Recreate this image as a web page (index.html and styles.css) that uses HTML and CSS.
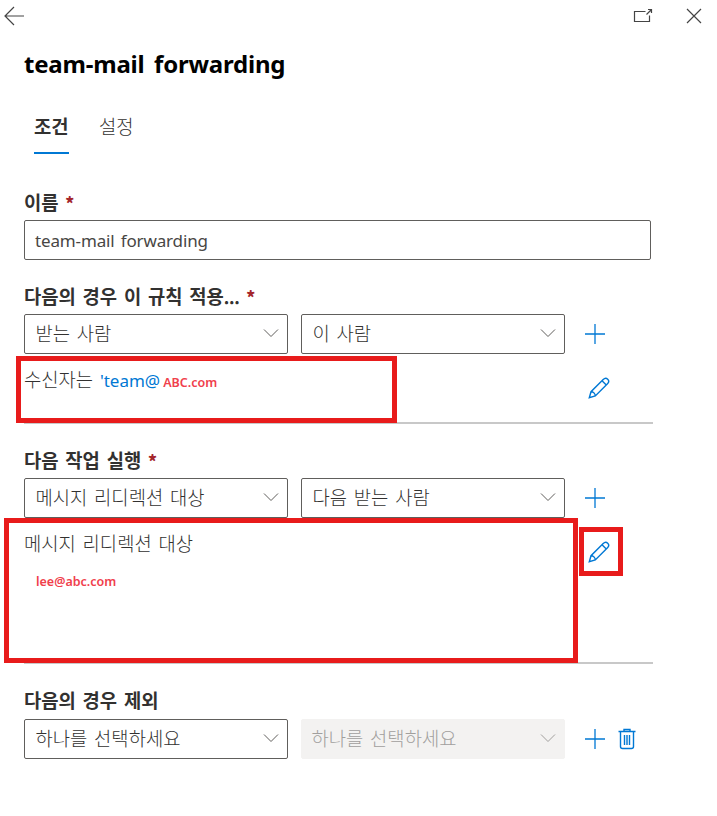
FILE: index.html
```html
<!DOCTYPE html>
<html lang="ko">
<head>
<meta charset="UTF-8">
<title>team-mail forwarding</title>
<link rel="stylesheet" href="styles.css">
</head>
<body>

<svg width="0" height="0" class="sprite">
  <symbol id="chevron" viewBox="0 0 16 10"><path d="M1 1.5L8 8.5L15 1.5"/></symbol>
  <symbol id="plus" viewBox="0 0 20 20"><path d="M10 0V20M0 10H20"/></symbol>
  <symbol id="pencil" viewBox="0 0 22 22"><path d="M1.3 20.7L3 14.7L15.2 2.5C16.6 1.1 18.4 .9 19.7 2.2C21 3.5 20.9 5.4 19.5 6.8L7.3 19Z M3 14.7C5.3 14.7 7.3 16.5 7.3 19 M14 3.7L18.3 8"/></symbol>
</svg>

<div class="topbar">
  <svg class="back" width="21" height="20" viewBox="0 0 21 20"><path d="M20 10H1M10 1L1 10L10 19"/></svg>
  <div class="window-icons">
    <svg width="20" height="16" viewBox="0 0 20 16"><path d="M12.5 3.5H1.5V13.5H16.5V7.5M13.5 6.5L18 2M15 1.5H18.5V5"/></svg>
    <svg width="16" height="16" viewBox="0 0 16 16"><path d="M1 1L15 15M15 1L1 15"/></svg>
  </div>
</div>

<h1>team-mail forwarding</h1>

<div class="tabs">
  <a class="tab active">조건</a>
  <a class="tab">설정</a>
</div>

<form class="rule">
  <section class="name">
    <label>이름 <b class="required">*</b></label>
    <div class="input">team-mail forwarding</div>
  </section>

  <section class="condition">
    <label>다음의 경우 이 규칙 적용<span class="dots">...</span> <b class="required">*</b></label>
    <div class="row">
      <div class="select">받는 사람<svg class="chevron"><use href="#chevron"/></svg></div>
      <div class="select">이 사람<svg class="chevron"><use href="#chevron"/></svg></div>
      <svg class="plus"><use href="#plus"/></svg>
    </div>
    <div class="detail">
      <div class="value">수신자는 <span class="link">'team@</span><span class="note">ABC.com</span></div>
      <svg class="pencil"><use href="#pencil"/></svg>
      <div class="mark mark-condition"></div>
    </div>
  </section>

  <section class="action">
    <label>다음 작업 실행 <b class="required">*</b></label>
    <div class="row">
      <div class="select">메시지 리디렉션 대상<svg class="chevron"><use href="#chevron"/></svg></div>
      <div class="select">다음 받는 사람<svg class="chevron"><use href="#chevron"/></svg></div>
      <svg class="plus"><use href="#plus"/></svg>
    </div>
    <div class="detail">
      <div class="value">메시지 리디렉션 대상<div class="note address">lee@abc.com</div></div>
      <svg class="pencil"><use href="#pencil"/></svg>
      <div class="mark mark-action"></div>
      <div class="mark mark-edit"></div>
    </div>
  </section>

  <section class="except">
    <label>다음의 경우 제외</label>
    <div class="row">
      <div class="select">하나를 선택하세요<svg class="chevron"><use href="#chevron"/></svg></div>
      <div class="select disabled">하나를 선택하세요<svg class="chevron"><use href="#chevron"/></svg></div>
      <svg class="plus"><use href="#plus"/></svg>
      <svg class="trash" width="18" height="22" viewBox="0 0 18 22"><path d="M.5 3.5H17.5M6 3V1.5H12V3M2.5 4V18.5Q2.5 20.5 4.5 20.5H13.5Q15.5 20.5 15.5 18.5V4M6.5 7V17M9 7V17M11.5 7V17"/></svg>
    </div>
  </section>
</form>

</body>
</html>
```

FILE: styles.css
```css
* {
  box-sizing: border-box;
}

body {
  margin: 0;
  height: 816px;
  overflow: hidden;
  background: #fff;
  color: #323130;
  font-family: "Noto Sans", "Noto Sans CJK KR", sans-serif;
  font-size: 17px;
  line-height: 26px;
}

svg {
  fill: none;
  stroke: #444;
  stroke-width: 1.2;
  flex: none;
}

.sprite {
  display: block;
}

.topbar {
  display: flex;
  justify-content: space-between;
  align-items: center;
  height: 32px;
  padding: 0 15px 0 4px;
}

.window-icons {
  display: flex;
  align-items: center;
  gap: 33px;
}

h1 {
  margin: 12px 0 0 24px;
  color: #000;
  font-size: 24px;
  font-weight: bold;
  letter-spacing: -0.2px;
  word-spacing: 3.5px;
  line-height: 40px;
  white-space: nowrap;
}

.tabs {
  display: flex;
  gap: 30px;
  height: 42px;
  margin: 28px 0 0 34px;
}

.tab {
  width: 35px;
  font-size: 18.8px;
  line-height: 28px;
  font-family: "Noto Sans CJK KR", sans-serif;
  font-weight: 300;
  white-space: nowrap;
}

.tab.active {
  font-weight: bold;
  border-bottom: 2px solid #0078d4;
}

.rule {
  width: 629px;
  margin: 35px 0 0 24px;
}

label {
  display: block;
  height: 31px;
  font-family: "Noto Sans CJK KR", sans-serif;
  font-size: 18.8px;
  font-weight: bold;
  word-spacing: 1.5px;
  white-space: nowrap;
}

.dots {
  font-size: 17px;
  letter-spacing: -0.3px;
}

.required {
  color: #a4262c;
  font-size: 17px;
}

.input {
  width: 627px;
  height: 40px;
  padding: 0 10px;
  border: 1px solid #605e5c;
  border-radius: 2px;
  color: #484644;
  letter-spacing: -0.15px;
  word-spacing: 2px;
  line-height: 39px;
}

.condition {
  margin-top: 23px;
}

.action {
  margin-top: 23px;
}

.except {
  margin-top: 23px;
}

.except label {
  height: 32px;
}

.row {
  display: flex;
  align-items: center;
  gap: 13px;
}

.select {
  display: flex;
  align-items: center;
  justify-content: space-between;
  width: 264px;
  height: 40px;
  padding: 0 8px 2px 10.5px;
  border: 1px solid #605e5c;
  border-radius: 2px;
  font-family: "Noto Sans CJK KR", sans-serif;
  font-size: 18.8px;
  font-weight: 300;
  word-spacing: 1.5px;
  white-space: pre;
}

.select.disabled {
  padding-left: 9.5px;
  border-color: #f3f2f1;
  background: #f3f2f1;
  color: #a19f9d;
}

.chevron {
  width: 16px;
  height: 10px;
  stroke: #605e5c;
  stroke-width: 1;
}

.disabled .chevron {
  stroke: #a19f9d;
}

.plus {
  width: 20px;
  height: 20px;
  margin-left: 7px;
  stroke: #0078d4;
  stroke-width: 1.3;
}

.detail {
  position: relative;
  display: flex;
  justify-content: space-between;
  height: 70px;
  padding: 12px 43px 0 0;
  border-bottom: 2px solid #c8c8c8;
}

.action .detail {
  height: 146px;
}

.value {
  font-family: "Noto Sans CJK KR", sans-serif;
  font-size: 18.8px;
  font-weight: 300;
  word-spacing: 1.5px;
}

.link {
  color: #0078d4;
  font-family: "Noto Sans", sans-serif;
  font-size: 17px;
  font-weight: normal;
}

.note {
  margin-left: 3px;
  color: #f0404c;
  font-family: "Noto Sans", sans-serif;
  font-size: 12.5px;
  font-weight: 600;
}

.address {
  margin: 13px 0 0 12px;
}

.pencil {
  width: 22px;
  height: 22px;
  margin-top: 11px;
  stroke: #0078d4;
  stroke-width: 1.4;
}

.trash {
  stroke: #0078d4;
  stroke-width: 1.4;
}

/* red callout frames */
.mark {
  position: absolute;
  border: 5px solid #e81b1b;
}

.mark-condition {
  left: -8px;
  top: 2px;
  width: 381px;
  height: 67px;
}

.mark-action {
  left: -20px;
  top: 0;
  width: 574px;
  height: 145px;
}

.mark-edit {
  left: 555px;
  top: 9px;
  width: 44px;
  height: 49px;
}
```
